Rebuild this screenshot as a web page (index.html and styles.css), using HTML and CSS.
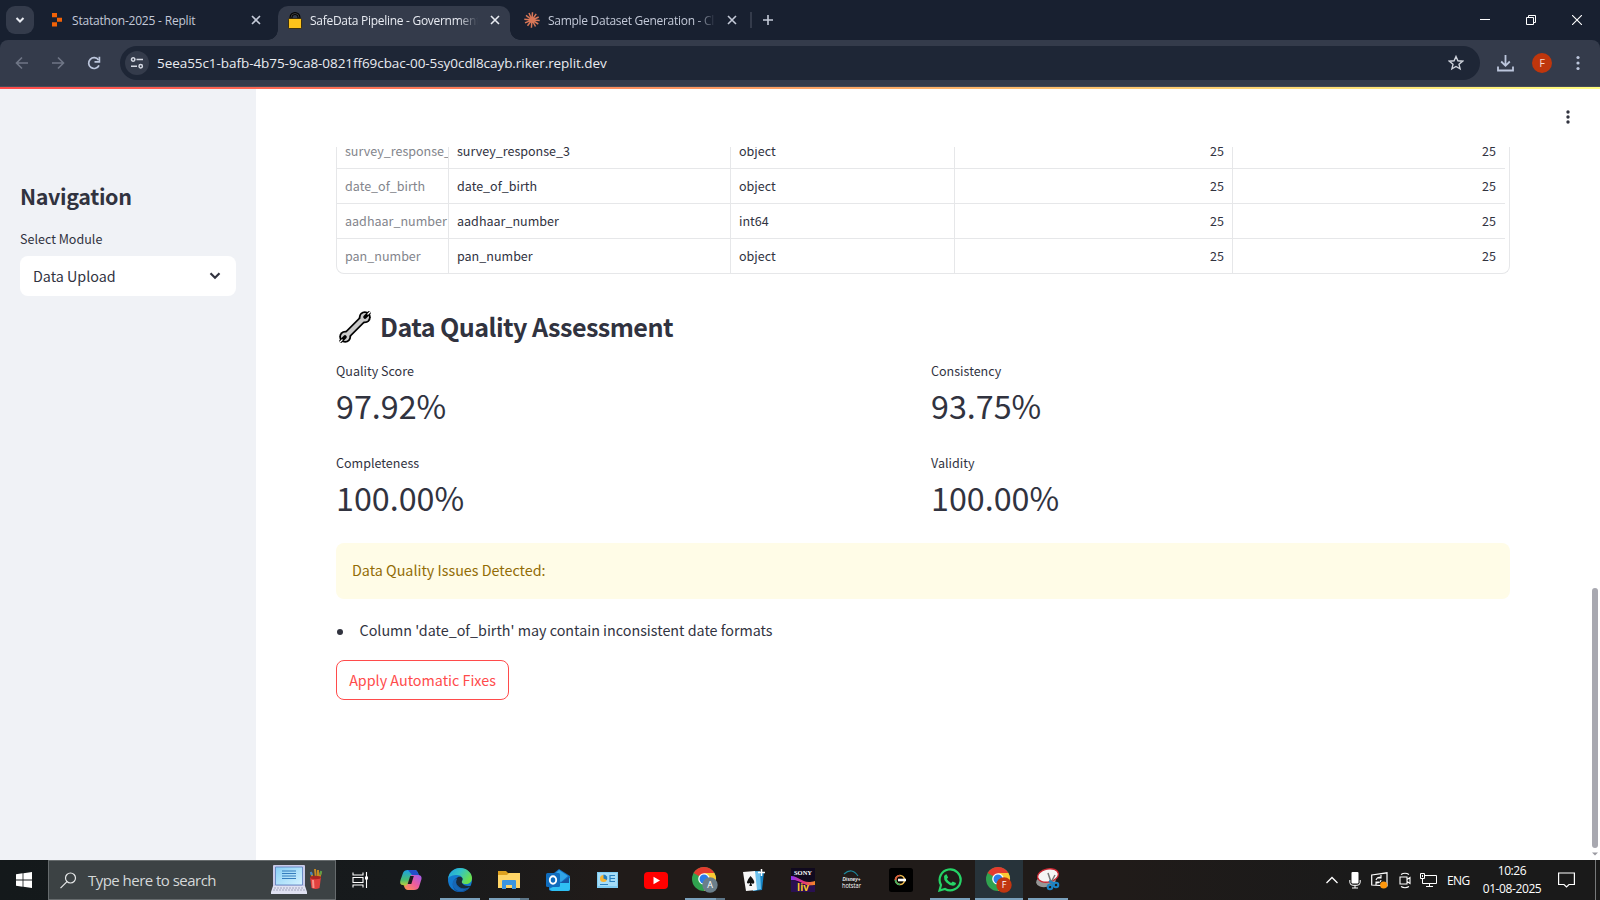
FILE: index.html
```html
<!DOCTYPE html>
<html lang="en">
<head>
<meta charset="utf-8">
<title>SafeData Pipeline</title>
<link rel="stylesheet" href="styles.css">
</head>
<body>
<div class="screen">
  <header class="tabstrip">
    <div class="tab-search"><svg width="28" height="28" viewBox="0 0 28 28"><path d="M10.500 12l3.500 3.500 3.500-3.500" fill="none" stroke="#e8ebf2" stroke-width="2"/></svg></div>
    <div class="tab tab-first">
      <svg class="fav" width="12" height="14" viewBox="0 0 12 14"><path d="M1 0h5v4.200H1zM6 4.700H11v4.100H6zM1 9.300h5v4.200H1z" fill="#f26207"/></svg>
      <span class="tab-title t1">Statathon-2025 - Replit</span>
      <svg class="x" width="10" height="10" viewBox="0 0 10 10"><path d="M1 1l8 8M9 1l-8 8" stroke="#c4cad8" stroke-width="1.600"/></svg>
    </div>
    <div class="tab tab-active">
      <svg class="fav" width="14" height="17" viewBox="0 0 14 17"><path d="M3 8V5.500a4 4 0 0 1 8 0V8" fill="none" stroke="#000" stroke-width="3"/><path d="M3 8V5.500a4 4 0 0 1 8 0V8" fill="none" stroke="#4a4a4a" stroke-width=".8"/><rect x=".5" y="6.500" width="13" height="10" rx="1" fill="#fcc21b" stroke="#241c06" stroke-width=".8"/></svg>
      <span class="tab-title t2">SafeData Pipeline - Government</span>
      <svg class="x" width="10" height="10" viewBox="0 0 10 10"><path d="M1 1l8 8M9 1l-8 8" stroke="#e8ebf2" stroke-width="1.600"/></svg>
    </div>
    <div class="tab tab-third">
      <svg class="fav" width="16" height="16" viewBox="-8 -8 16 16"><path d="M0 0L.5-7.800M0 0l4.200-6.200M0 0l6.700-3M0 0l7.700.4M0 0l6.300 4M0 0l3.500 6.500M0 0l-.6 7.700M0 0l-4.500 5.800M0 0l-7 2.900M0 0l-7.700-.8M0 0l-6-4.600M0 0l-3-7" stroke="#d97757" stroke-width="1.500"/></svg>
      <span class="tab-title t3">Sample Dataset Generation - Cl</span>
      <svg class="x" width="10" height="10" viewBox="0 0 10 10"><path d="M1 1l8 8M9 1l-8 8" stroke="#c4cad8" stroke-width="1.600"/></svg>
    </div>
    <div class="tab-sep"></div>
    <svg class="plus" width="12" height="12" viewBox="0 0 12 12"><path d="M6 1v10M1 6h10" stroke="#c4cad8" stroke-width="1.600"/></svg>
    <div class="window-buttons">
      <svg width="10" height="10" viewBox="0 0 10 10"><path d="M0 4.500h10" stroke="#fff"/></svg>
      <svg width="10" height="10" viewBox="0 0 10 10"><path d="M.5 2.500h7v7h-7zM2.500 2.500v-2h7v7h-2" fill="none" stroke="#fff"/></svg>
      <svg width="10" height="10" viewBox="0 0 10 10"><path d="M0 0l10 10M10 0L0 10" stroke="#fff" stroke-width="1.100"/></svg>
    </div>
  </header>
  <div class="toolbar-back">
  <div class="toolbar">
    <svg class="arrow" width="14" height="14" viewBox="0 0 14 14"><path d="M13 7H2M7 1.500L1.500 7 7 12.500" fill="none" stroke="#6f7686" stroke-width="1.600"/></svg>
    <svg class="arrow" width="14" height="14" viewBox="0 0 14 14"><path d="M1 7h11M7 1.500L12.500 7 7 12.500" fill="none" stroke="#6f7686" stroke-width="1.600"/></svg>
    <svg class="reload" width="14" height="14" viewBox="0 0 14 14"><path d="M12 9.300A5.400 5.400 0 1 1 11.500 4" fill="none" stroke="#bcc6dc" stroke-width="1.700"/><path d="M12.400.8v5H7.500" fill="none" stroke="#bcc6dc" stroke-width="1.700"/></svg>
    <div class="omnibox">
      <div class="site-info"><svg width="14" height="14" viewBox="0 0 14 14"><g fill="none" stroke="#d5d9e3" stroke-width="1.500"><circle cx="3.200" cy="3.500" r="1.700"/><path d="M6.500 3.500H13M1 10.300h6"/><circle cx="10.700" cy="10.300" r="1.700"/></g></svg></div>
      <span class="url">5eea55c1-bafb-4b75-9ca8-0821ff69cbac-00-5sy0cdl8cayb.riker.replit.dev</span>
      <svg class="star" width="16" height="16" viewBox="0 0 16 16"><path d="M8 1.500l1.900 4.300 4.700.4-3.600 3.100 1.100 4.600L8 11.500l-4.100 2.400L5 9.300 1.400 6.200l4.700-.4z" fill="none" stroke="#cfd3dc" stroke-width="1.400"/></svg>
    </div>
    <svg class="download" width="17" height="17" viewBox="0 0 17 17"><path d="M8.500 0v10M4.200 6.500l4.300 4.300 4.300-4.300M1 11.500v4h15v-4" fill="none" stroke="#bcc6dc" stroke-width="1.800"/></svg>
    <div class="avatar">F</div>
    <svg class="kebab" width="4" height="16" viewBox="0 0 4 16"><g fill="#bcc6dc"><circle cx="2" cy="2.500" r="1.600"/><circle cx="2" cy="8" r="1.600"/><circle cx="2" cy="13.500" r="1.600"/></g></svg>
  </div>
  </div>
  <div class="decoration"></div>
  <div class="app">
    <aside class="sidebar">
      <h2 class="nav-title">Navigation</h2>
      <label class="nav-label">Select Module</label>
      <div class="select"><span>Data Upload</span><svg width="12" height="8" viewBox="0 0 12 8"><path d="M1.500 1.300L6 5.700l4.500-4.400" fill="none" stroke="#31333f" stroke-width="2.200"/></svg></div>
    </aside>
    <main class="main">
      <div class="app-header"><svg width="4" height="14" viewBox="0 0 4 14"><g fill="#31333f"><circle cx="2" cy="2" r="1.700"/><circle cx="2" cy="7" r="1.700"/><circle cx="2" cy="12" r="1.700"/></g></svg></div>
      <div class="content">
        <div class="table-clip">
          <div class="table">
            <div class="row"><span class="idx">survey_response_3</span><span>survey_response_3</span><span>object</span><span class="num">25</span><span class="num">25</span></div>
            <div class="row"><span class="idx">date_of_birth</span><span>date_of_birth</span><span>object</span><span class="num">25</span><span class="num">25</span></div>
            <div class="row"><span class="idx">aadhaar_number</span><span>aadhaar_number</span><span>int64</span><span class="num">25</span><span class="num">25</span></div>
            <div class="row"><span class="idx">pan_number</span><span>pan_number</span><span>object</span><span class="num">25</span><span class="num">25</span></div>
          </div>
        </div>
        <h3 class="section-title"><svg width="34" height="34" viewBox="0 0 34 34"><path d="M7.500 26.500L26.500 7.500" stroke="#000" stroke-width="7.600"/><circle cx="7.200" cy="26.800" r="6"/><circle cx="26.800" cy="7.200" r="6"/><path d="M8 26L26 8" stroke="#c9c9c9" stroke-width="4.400"/><circle cx="7.200" cy="26.800" r="4.200" fill="#c9c9c9"/><circle cx="26.800" cy="7.200" r="4.200" fill="#c9c9c9"/><path d="M7 27l-4 4M27 7l4-4" stroke="#000" stroke-width="3.600" stroke-linecap="round"/><path d="M4.500 29.500l-3 3M29.500 4.500l3-3" stroke="#fff" stroke-width="1.200"/></svg><span>Data Quality Assessment</span></h3>
        <div class="metrics">
          <div class="metric"><div class="m-label">Quality Score</div><div class="m-value">97.92%</div></div>
          <div class="metric"><div class="m-label">Consistency</div><div class="m-value">93.75%</div></div>
          <div class="metric"><div class="m-label">Completeness</div><div class="m-value">100.00%</div></div>
          <div class="metric"><div class="m-label">Validity</div><div class="m-value">100.00%</div></div>
        </div>
        <div class="alert">Data Quality Issues Detected:</div>
        <div class="issue"><i class="dot"></i><span>Column 'date_of_birth' may contain inconsistent date formats</span></div>
        <button class="fix">Apply Automatic Fixes</button>
      </div>
      <div class="scrollbar"><div class="thumb"></div><svg width="6" height="4" viewBox="0 0 6 4"><path d="M0 .5h6L3 3.500z" fill="#9a9aa2"/></svg></div>
    </main>
  </div>
  <footer class="taskbar">
    <div class="start"><svg width="16" height="16" viewBox="0 0 16 16"><path d="M0 2.200L6.600 1.300v6.300H0zM7.400 1.200L16 0v7.600H7.400zM0 8.400h6.600v6.300L0 13.800zM7.400 8.400H16V16l-8.600-1.200z" fill="#fff"/></svg></div>
    <div class="search">
      <svg width="17" height="17" viewBox="0 0 17 17"><g fill="none" stroke="#e6e8e9" stroke-width="1.200"><circle cx="10.500" cy="6" r="5"/><path d="M7 9.600L.5 16.200"/></g></svg>
      <span>Type here to search</span>
      <svg class="doodle" width="52" height="32" viewBox="0 0 52 32">
        <defs><linearGradient id="lap" x1="0" y1="0" x2="1" y2="1"><stop offset="0" stop-color="#86cef5"/><stop offset="1" stop-color="#d6f3ff"/></linearGradient></defs>
        <path d="M3 1h30a1 1 0 0 1 1 1v21H2V2a1 1 0 0 1 1-1z" fill="#c8cae8"/><path d="M4.500 3h27v18h-27z" fill="url(#lap)" stroke="#5779ba" stroke-width=".8"/><path d="M11 7h14M11 9.500h14M11 12h14M11 14.500h14" stroke="#2872b6" stroke-width=".9"/><path d="M2 22h32l2 6v2H0v-2z" fill="#dfe1f1"/><path d="M3 24h30M2 26h32" stroke="#a3a6bd" stroke-width="1.200" stroke-dasharray="2 1"/>
        <path d="M42 15l-2-7M45 15l-1-10M47 15V6M48 15l2-7" stroke-width="2" stroke="#c78a22"/><path d="M40.800 11l-1-3" stroke="#3c83c6" stroke-width="2"/><path d="M49 11l1.200-4" stroke="#5c9e4a" stroke-width="2"/><path d="M39 13h11l-1.500 11q-4 2-8 0z" fill="#e2413f"/><ellipse cx="44.500" cy="13.500" rx="5.500" ry="1.700" fill="#a82522"/><path d="M42 16l.5 8" stroke="#f7918a" stroke-width="2"/>
      </svg>
    </div>
    <div class="apps">
      <div class="slot slot-view"><svg width="17" height="16" viewBox="0 0 17 16"><path d="M1 .5V3h10V.5M1 15.500V13h10v2.500M1 5.500h10v5H1zM14.500 0v16" fill="none" stroke="#fff" stroke-width="1.100"/><path d="M13 4.500h3v3h-3z" fill="#fff"/></svg></div>
      <div class="slot"><svg width="24" height="24" viewBox="0 0 24 24">
        <defs><linearGradient id="c1" x1="0" y1="0" x2="0" y2="1"><stop offset="0" stop-color="#1aa0e8"/><stop offset=".55" stop-color="#48bd70"/><stop offset="1" stop-color="#f8d324"/></linearGradient><linearGradient id="c2" x1="0" y1="1" x2="1" y2="0"><stop offset="0" stop-color="#fb9a4b"/><stop offset=".5" stop-color="#ee5d9c"/><stop offset="1" stop-color="#9d5bf0"/></linearGradient></defs>
        <path d="M9 2h7q2 0 3 3l1 3h-5q-2 0-3 3l-2 6q-1 3-3 3-2-3-3-3H4q-4 0-2.500-5L4 5q1-3 5-3z" fill="url(#c1)"/><path d="M15 22H9q-3 0-4-4 3 0 4-3l3-8h7q4 0 3.500 4L20 19q-1 3-5 3z" fill="url(#c2)"/><path d="M9 2h7q2 0 3 3l1 2h-7z" fill="#234fc9"/><path d="M11.200 8h3.600l-2.500 8H8.700z" fill="#1a1a1c"/></svg></div>
      <div class="slot run"><svg width="24" height="24" viewBox="0 0 24 24">
        <defs><linearGradient id="e1" x1="0" y1="0" x2="1" y2=".5"><stop offset="0" stop-color="#1d9ee2"/><stop offset=".5" stop-color="#33c3c6"/><stop offset="1" stop-color="#6be04d"/></linearGradient></defs>
        <circle cx="12" cy="12" r="12" fill="#1379ce"/><path d="M0 11C1 4 6 0 12 0c7 0 12 5 12 10 0 4-3 6-6 6-4 0-5-2-4-3 2-3-1-6-5-6-4 0-8 1-9 4z" fill="url(#e1)"/><path d="M8 13c0 6 5 9 13 7-3 4-9 5-13 3-5-4-4-12 2-14-1 1-2 2-2 4z" fill="#0d4f9c"/><path d="M14 13c2-3-1-5-4-4-4 3-2 9 3 11 4 1 8 0 10-2l-3 0c-4 0-7-3-6-5z" fill="#1b1c1e" opacity=".85"/><path d="M9 11c-3 6 2 11 9 10-3 3-9 3-12-1s-1-9 3-9z" fill="#1767b5"/></svg></div>
      <div class="slot run multi"><svg width="22" height="20" viewBox="0 0 22 20"><path d="M0 1h8l2 2h12v15H0z" fill="#dea11f"/><path d="M0 5h9l2-2h11v15H0z" fill="#ffd567"/><path d="M4 19v-8q0-1 1-1h12q1 0 1 1v8h-4v-4H8v4z" fill="#3b95df"/></svg></div>
      <div class="slot"><svg width="24" height="23" viewBox="0 0 24 23"><path d="M3 8l10-8 11 7v13q0 2-2 2H6q-3 0-3-2z" fill="#1270c4"/><path d="M13 1l9 6-7 6-9-5z" fill="#31a4e8"/><path d="M3 20l21-11v11q0 2-2 2H6z" fill="#2fc0f3"/><path d="M14 14l9-6v6z" fill="#1755a3"/><rect y="4" width="14" height="14" rx="1.500" fill="#0f6cbd"/><ellipse cx="7" cy="11" rx="3.200" ry="3.700" fill="none" stroke="#fff" stroke-width="1.900"/></svg></div>
      <div class="slot"><svg width="21" height="16" viewBox="0 0 21 16"><path d="M0 0h21v16H0z" fill="#7fccf2"/><path d="M1 1h19v13H1z" fill="#a5ddf8"/><circle cx="6.500" cy="6.500" r="3.500" fill="#f6b32f"/><path d="M6.500 6.500V2.500A4 4 0 0 1 10 8z" fill="#1f7dc2"/><path d="M13 3.500h5M13 6.500h5M13 9.500h5M13 3v7M3 12.500h8" stroke="#2880be" stroke-width="1.200"/></svg></div>
      <div class="slot"><svg width="24" height="17" viewBox="0 0 24 17"><rect width="24" height="17" rx="4" fill="#f00"/><path d="M9.500 4.700v7.600l6.500-3.800z" fill="#fff"/></svg></div>
      <div class="slot run multi"><svg width="26" height="26" viewBox="0 0 26 26"><circle cx="12" cy="12" r="12" fill="#30a34f"/><path d="M12 12L1.600 6A12 12 0 0 1 22.400 6z" fill="#e33b2e"/><path d="M12 6h10.400A12 12 0 0 1 12 24l5-9z" fill="#fcc934"/><circle cx="12" cy="12" r="5.800" fill="#fff"/><circle cx="12" cy="12" r="4.500" fill="#2b7de9"/><circle cx="18" cy="18" r="7.700" fill="#6b7f8b"/><text x="18" y="21.300" class="badge">A</text></svg></div>
      <div class="slot"><svg width="23" height="23" viewBox="0 0 23 23"><path d="M12 2l9 1-2 18-9 1z" fill="#1685c6"/><path d="M8 3l9-1 1 18-8 2z" fill="#6cc1ec"/><path d="M0 3l12-1 2 19-11 1z" fill="#f7f7f7"/><path d="M7.500 7q4 4 3.800 6.500-.8 2-3 .6l.8 2.900H6.300l.8-2.900q-3 1.200-3.200-.8Q4.500 10.500 7.500 7z" fill="#111"/><path d="M18.500 0v7M15 3.500h7" stroke="#fff" stroke-width="1.500"/></svg></div>
      <div class="slot"><svg width="24" height="24" viewBox="0 0 24 24"><defs><linearGradient id="s1"><stop offset="0" stop-color="#8735f4"/><stop offset=".5" stop-color="#e0307c"/><stop offset="1" stop-color="#f38b24"/></linearGradient></defs><path d="M0 0h24v24H0z" fill="#10091e"/><path d="M0 8c9 0 11 9 24 5v4C13 20 10 11 0 12z" fill="url(#s1)"/><path d="M0 12c8 0 12 8 24 5v7H0z" fill="#291052"/><text x="12" y="7" class="sony">SONY</text><text x="12" y="22.500" class="liv">liv</text></svg></div>
      <div class="slot"><svg width="24" height="22" viewBox="0 0 24 22"><path d="M4 5Q12-2 18 7" fill="none" stroke="#1c879b" stroke-width="1.200"/><text x="11.500" y="11.500" class="disney" textLength="18" lengthAdjust="spacingAndGlyphs">Disney+</text><text x="11.500" y="18.500" class="hotstar" textLength="19" lengthAdjust="spacingAndGlyphs">hotstar</text></svg></div>
      <div class="slot"><svg width="24" height="24" viewBox="0 0 24 24"><rect width="24" height="24" rx="2.500" fill="#000"/><circle cx="11" cy="12" r="4.500" fill="none" stroke="#e8b64c" stroke-width="1.700"/><path d="M6.500 12a4.500 4.500 0 0 1 4.500-4.500" fill="none" stroke="#d95a3c" stroke-width="1.700"/><path d="M6.500 12a4.500 4.500 0 0 0 4.500 4.500" fill="none" stroke="#3dae63" stroke-width="1.700"/><path d="M9 12h8" stroke="#fff" stroke-width="2.600"/></svg></div>
      <div class="slot run"><svg width="24" height="24" viewBox="0 0 24 24"><path d="M1.500 22.500L3 17A10.500 10.500 0 1 1 7 21z" fill="none" stroke="#25d366" stroke-width="2.200"/><path d="M8.500 6.200l1.600 3.400-1.200 1.500q1.500 2.800 4.200 4l1.600-1.600 3.300 1.600q-.3 2.700-3 2.700-3.700-.2-6.600-3.200T6 8.600q.4-2.200 2.500-2.400z" fill="#25d366"/></svg></div>
      <div class="slot active"><svg width="26" height="26" viewBox="0 0 26 26"><circle cx="12" cy="12" r="12" fill="#30a34f"/><path d="M12 12L1.600 6A12 12 0 0 1 22.400 6z" fill="#e33b2e"/><path d="M12 6h10.400A12 12 0 0 1 12 24l5-9z" fill="#fcc934"/><circle cx="12" cy="12" r="5.800" fill="#fff"/><circle cx="12" cy="12" r="4.500" fill="#2b7de9"/><circle cx="18" cy="18" r="7.700" fill="#c13610"/><text x="18" y="21.300" class="badge">F</text></svg></div>
      <div class="slot run"><svg width="24" height="24" viewBox="0 0 24 24"><ellipse cx="10" cy="13" rx="10" ry="6" transform="rotate(-12 10 13)" fill="#969696"/><ellipse cx="12" cy="7.500" rx="10.500" ry="6.500" transform="rotate(-12 12 7.500)" fill="#f5f5f5" stroke="#cc2833" stroke-width="1.300"/><path d="M12 5l4 12M19 7l-6 11" stroke="#777" stroke-width="1.500"/><g fill="none" stroke="#1b83c6" stroke-width="2"><circle cx="14" cy="19" r="2.300"/><circle cx="20" cy="17" r="2.300"/><path d="M13 13l6 3"/></g></svg></div>
    </div>
    <div class="tray">
      <svg class="t-up" width="12" height="8" viewBox="0 0 12 8"><path d="M.5 7L6 1.500 11.500 7" fill="none" stroke="#fff" stroke-width="1.300"/></svg>
      <svg class="t-mic" width="12" height="17" viewBox="0 0 12 17"><rect x="2.500" width="7" height="11.500" rx="1" fill="#fff"/><path d="M.8 8v2.500Q1 13.300 4 13.300h4q3 0 3.200-2.800V8M6 13v3M3 16h6" fill="none" stroke="#fff"/></svg>
      <svg class="t-sync" width="17" height="17" viewBox="0 0 17 17"><path d="M.7 3L16 .8v13L.7 13z" fill="none" stroke="#fff" stroke-width="1.200"/><path d="M5 8q1-3 5-3M10 3v3H7M10 8q-.5 3-4.500 3M5 13v-3h3" fill="none" stroke="#fff" stroke-width="1.100"/><circle cx="12.700" cy="13" r="3.600" fill="#ff980c"/></svg>
      <svg class="t-cam" width="12" height="17" viewBox="0 0 12 17"><path d="M2 2.500Q6 0 10 2.500M2 14.500q4 2.500 8 0M1 5h7v7H1zM8 7.500l3-2v6l-3-2" fill="none" stroke="#fff" stroke-width="1.100"/></svg>
      <svg class="t-net" width="17" height="15" viewBox="0 0 17 15"><path d="M5 2.500h11.500v8H2.500V6M9.500 10.500v3M6 13.500h7M.5.500h4v5h-4zM2.500 2v2" fill="none" stroke="#fff"/></svg>
      <span class="lang">ENG</span>
      <div class="clock"><span>10:26</span><span>01-08-2025</span></div>
      <svg class="t-note" width="17" height="17" viewBox="0 0 17 17"><path d="M.6 1h15.800v11.500H11L8.500 15 6 12.500H.6z" fill="none" stroke="#fff" stroke-width="1.200"/></svg>
      <div class="peek"></div>
    </div>
  </footer>
</div>
</body>
</html>
```
FILE: styles.css
```css
* { box-sizing: border-box; }
body { margin: 0; }
svg { display: block; flex: none; }
.screen { width: 1600px; height: 900px; display: flex; flex-direction: column; overflow: hidden; background: #fff; }

/* Browser chrome */
.tabstrip, .toolbar, .taskbar { font-family: "Open Sans", "Noto Sans", sans-serif; }
.tabstrip { height: 40px; flex: none; display: flex; align-items: center; background: #182030; color: #c3c9d8; }
.tab-search { width: 28px; height: 28px; margin-left: 6px; border-radius: 9px; background: #343b4b; flex: none; }
.tab { display: flex; align-items: center; height: 34px; margin-top: 6px; padding-bottom: 6px; flex: none; }
.tab-first { width: 244px; padding-left: 17px; }
.tab-active { width: 232px; padding-left: 10px; background: #343b4b; border-radius: 10px 10px 0 0; color: #e8ebf2; position: relative; }
.tab-active::before, .tab-active::after { content: ""; position: absolute; bottom: 0; width: 10px; height: 10px; }
.tab-active::before { left: -10px; background: radial-gradient(circle at 0 0, transparent 9.5px, #343b4b 10px); }
.tab-active::after { right: -10px; background: radial-gradient(circle at 100% 0, transparent 9.5px, #343b4b 10px); }
.tab-third { width: 240px; padding-left: 14px; }
.tab-title { font-size: 12px; white-space: nowrap; overflow: hidden; line-height: 20px; padding-top: 1px; flex: none; }
.t1 { margin-left: 9px; width: 179px; letter-spacing: -0.2px; }
.t2 { margin-left: 8px; width: 168px; letter-spacing: -0.28px; }
.t3 { margin-left: 8px; width: 168px; letter-spacing: -0.28px; }
.t2, .t3 { -webkit-mask-image: linear-gradient(90deg, #000 88%, transparent 100%); mask-image: linear-gradient(90deg, #000 88%, transparent 100%); }
.tab-active .x { margin-left: 12px; }
.tab-third .x { margin-left: 11px; }
.tab-sep { width: 2px; height: 16px; background: #343b4b; flex: none; }
.plus { margin-left: 10px; }
.window-buttons { margin-left: auto; display: flex; gap: 36px; padding-right: 18px; }

.toolbar-back { flex: none; background: #182030; }
.toolbar { height: 47px; display: flex; align-items: center; background: #343b4b; border-bottom: 1px solid #454b58; border-radius: 8px 8px 0 0; padding-left: 15px; }
.arrow { margin-right: 22px; }
.reload { margin-right: 19px; }
.omnibox { width: 1360px; height: 34px; border-radius: 17px; background: #1e2636; display: flex; align-items: center; padding: 0 16px 0 5px; flex: none; }
.site-info { width: 24px; height: 24px; border-radius: 50%; background: #343b4b; display: flex; align-items: center; justify-content: center; }
.url { margin-left: 8px; font-size: 13.5px; line-height: 20px; color: #e9ebf0; white-space: nowrap; letter-spacing: -0.06px; }
.star { margin-left: auto; }
.download { margin-left: 17px; }
.avatar { width: 20px; height: 20px; margin-left: 18px; border-radius: 50%; background: #bf360c; color: #f7d9cf; font-size: 11px; line-height: 20px; text-align: center; }
.kebab { margin-left: 24px; }
.decoration { height: 2px; flex: none; background: linear-gradient(90deg, #ff4b4b, #fffd80); }

/* Application */
.app { flex: 1; min-height: 0; display: flex; font-family: "Noto Sans CJK SC", "Noto Sans CJK JP", sans-serif; font-size: 14.33px; color: #31333f; }
.sidebar { width: 256px; flex: none; background: #f0f2f6; padding: 92px 20px 0; }
.nav-title { margin: 0; font-size: 21.5px; line-height: 29px; font-weight: 600; letter-spacing: -0.36px; }
.nav-label { display: block; margin-top: 19px; font-size: 12.54px; line-height: 20px; }
.select { margin-top: 7px; height: 40px; border-radius: 8px; background: #fff; display: flex; align-items: center; justify-content: space-between; padding: 0 15px 0 13px; }
.select span { padding-bottom: 2px; }
.main { flex: 1; position: relative; min-width: 0; }
.app-header { height: 58px; display: flex; align-items: center; justify-content: flex-end; padding: 0 30px 2px 0; }
.content { padding: 0 90px 0 80px; }
.table-clip { height: 127px; overflow: hidden; display: flex; flex-direction: column; justify-content: flex-end; }
.table { border: 1px solid #e6e7e9; border-top: 0; border-radius: 0 0 8px 8px; flex: none; overflow: hidden; }
.row { display: grid; grid-template-columns: 112px 282px 224px 278px 272px; height: 35px; width: 1168px; border-bottom: 1px solid #e6e7e9; font-size: 12.54px; line-height: 34px; }
.row:last-child { height: 34px; border-bottom: 0; }
.row span { padding: 0 8px; border-right: 1px solid #e6e7e9; overflow: hidden; white-space: nowrap; }
.row .idx { color: #83858c; padding-right: 0; }
.row .num { text-align: right; }
.row span:last-child { border-right: 0; padding-right: 9px; }
.section-title { margin: 35px 0 0; height: 36px; display: flex; align-items: center; font-size: 25.1px; line-height: 36px; font-weight: 600; white-space: nowrap; letter-spacing: -0.54px; }
.section-title svg { margin: 0 8px 0 2px; }
.section-title span { padding-bottom: 3px; }
.metrics { display: grid; grid-template-columns: 1fr 1fr; gap: 16px; margin-top: 16px; }
.metric { height: 76px; }
.m-label { font-size: 12.54px; line-height: 20px; }
.m-value { font-size: 32.24px; line-height: 48px; font-weight: 400; }
.alert { margin-top: 14px; height: 56px; border-radius: 8px; background: #fffce7; color: #926c05; padding: 0 16px; line-height: 54px; }
.issue { margin-top: 20px; height: 24px; line-height: 22px; display: flex; align-items: center; }
.issue span { padding-bottom: 2px; }
.dot { width: 6px; height: 6px; border-radius: 50%; background: #31333f; margin: 1px 17px 0 0.5px; }
.fix { display: block; margin-top: 17px; width: 173px; height: 40px; border: 1px solid #ff4b4b; border-radius: 8px; background: #fff; color: #ff4b4b; font: inherit; padding: 0 0 2px; white-space: nowrap; }
.scrollbar { position: absolute; right: 0; top: 0; bottom: 0; width: 10px; display: flex; flex-direction: column; align-items: center; justify-content: flex-end; padding-bottom: 4px; }
.thumb { width: 6px; height: 260px; border-radius: 3px; background: #a8a8b0; margin-bottom: 4px; }

/* Taskbar */
.taskbar { height: 40px; flex: none; display: flex; background: linear-gradient(90deg, #14191b, #171a1c 25%, #201b19 38%, #201b19 70%, #1a1a1a 85%); }
.start { width: 48px; display: flex; align-items: center; justify-content: center; }
.search { width: 288px; border: 1px solid #666b6d; background: #3c4244; display: flex; align-items: center; padding: 0 12px 0 11px; color: #d5d8d9; font-size: 15px; }
.search span { margin-left: 11px; letter-spacing: -0.53px; white-space: nowrap; }
.doodle { margin-left: auto; }
.apps { display: flex; margin-left: 2px; }
.slot { width: 48px; margin-right: 1px; height: 40px; display: flex; align-items: center; justify-content: center; position: relative; }
.slot-view { padding-right: 4px; }
.run::after, .active::after { content: ""; position: absolute; bottom: 0; left: 4px; width: 40px; height: 2px; background: #7aa0bb; }
.multi::after { background: linear-gradient(90deg, #7aa0bb 31px, #5d7688 31px); }
.active { background: #27333a; }
.active::after { left: 0; width: 48px; }
.badge { font: 9px "Open Sans", sans-serif; fill: #fff; text-anchor: middle; }
.sony { font: bold 6.5px "Liberation Serif", serif; fill: #fff; text-anchor: middle; }
.liv { font: bold 10px "Open Sans", sans-serif; fill: #ffc629; text-anchor: middle; }
.disney { font: italic bold 6px "Liberation Sans", sans-serif; fill: #e9eff3; text-anchor: middle; }
.hotstar { font: 6.5px "Open Sans", sans-serif; fill: #fff; text-anchor: middle; }
.tray { margin-left: auto; display: flex; align-items: center; color: #fff; font-size: 12px; }
.t-mic { margin-left: 11px; }
.t-sync { margin-left: 10px; }
.t-cam { margin-left: 11px; }
.t-net { margin-left: 9px; }
.lang { margin-left: 10px; width: 23px; letter-spacing: -0.6px; }
.clock { width: 60px; margin-left: 12px; display: flex; flex-direction: column; align-items: center; line-height: 18px; letter-spacing: -0.4px; white-space: nowrap; }
.t-note { margin-left: 16px; }
.peek { width: 5px; height: 40px; margin-left: 20px; border-left: 1px solid #77797a; }
```
